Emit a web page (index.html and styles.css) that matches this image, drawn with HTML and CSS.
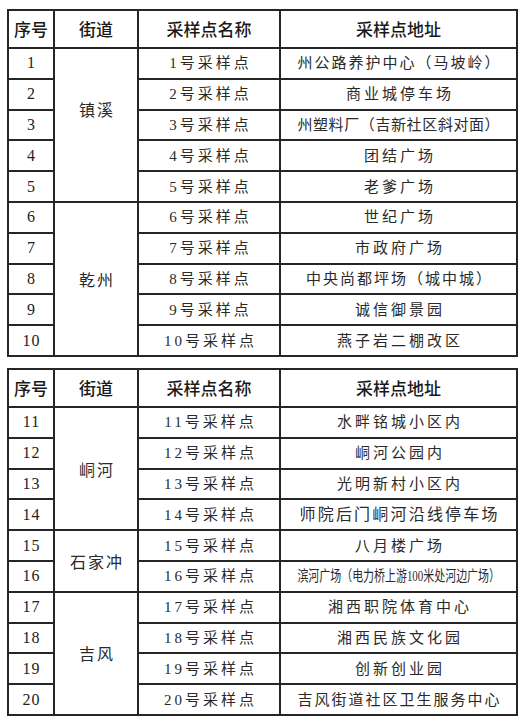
FILE: index.html
```html
<!DOCTYPE html>
<html lang="zh-CN">
<head>
<meta charset="utf-8">
<title>采样点</title>
<link rel="stylesheet" href="styles.css">
</head>
<body>
<div class="page">
<table class="sheet">
<colgroup><col class="c1"><col class="c2"><col class="c3"><col class="c4"></colgroup>
<thead>
<tr class="head"><th>序号</th><th>街道</th><th>采样点名称</th><th>采样点地址</th></tr>
</thead>
<tbody>
<tr><td class="num">1</td><td class="street up" rowspan="5">镇溪</td><td class="name">1号采样点</td><td class="addr t2">州公路养护中心（马坡岭）</td></tr>
<tr><td class="num">2</td><td class="name">2号采样点</td><td class="addr">商业城停车场</td></tr>
<tr><td class="num">3</td><td class="name">3号采样点</td><td class="addr t1">州塑料厂（吉新社区斜对面）</td></tr>
<tr><td class="num">4</td><td class="name">4号采样点</td><td class="addr">团结广场</td></tr>
<tr><td class="num">5</td><td class="name">5号采样点</td><td class="addr">老爹广场</td></tr>
<tr><td class="num">6</td><td class="street" rowspan="5">乾州</td><td class="name">6号采样点</td><td class="addr">世纪广场</td></tr>
<tr><td class="num">7</td><td class="name">7号采样点</td><td class="addr">市政府广场</td></tr>
<tr><td class="num">8</td><td class="name">8号采样点</td><td class="addr t2">中央尚都坪场（城中城）</td></tr>
<tr><td class="num">9</td><td class="name">9号采样点</td><td class="addr">诚信御景园</td></tr>
<tr><td class="num">10</td><td class="name">10号采样点</td><td class="addr">燕子岩二棚改区</td></tr>
</tbody>
</table>

<table class="sheet second">
<colgroup><col class="c1"><col class="c2"><col class="c3"><col class="c4"></colgroup>
<thead>
<tr class="head"><th>序号</th><th>街道</th><th>采样点名称</th><th>采样点地址</th></tr>
</thead>
<tbody>
<tr><td class="num">11</td><td class="street" rowspan="4">峒河</td><td class="name">11号采样点</td><td class="addr">水畔铭城小区内</td></tr>
<tr><td class="num">12</td><td class="name">12号采样点</td><td class="addr">峒河公园内</td></tr>
<tr><td class="num">13</td><td class="name">13号采样点</td><td class="addr">光明新村小区内</td></tr>
<tr><td class="num">14</td><td class="name">14号采样点</td><td class="addr big">师院后门峒河沿线停车场</td></tr>
<tr><td class="num">15</td><td class="street" rowspan="2">石家冲</td><td class="name">15号采样点</td><td class="addr">八月楼广场</td></tr>
<tr><td class="num">16</td><td class="name">16号采样点</td><td class="addr narrow"><span class="squeeze">滨河广场（电力桥上游100米处河边广场）</span></td></tr>
<tr><td class="num">17</td><td class="street" rowspan="4">吉风</td><td class="name">17号采样点</td><td class="addr">湘西职院体育中心</td></tr>
<tr><td class="num">18</td><td class="name">18号采样点</td><td class="addr">湘西民族文化园</td></tr>
<tr><td class="num">19</td><td class="name">19号采样点</td><td class="addr">创新创业园</td></tr>
<tr><td class="num">20</td><td class="name">20号采样点</td><td class="addr t2">吉风街道社区卫生服务中心</td></tr>
</tbody>
</table>
</div>
</body>
</html>
```

FILE: styles.css
```css
html, body {
  margin: 0;
  padding: 0;
  background: #ffffff;
}

.page {
  padding: 9px 0 0 7px;
}

.sheet {
  border-collapse: collapse;
  table-layout: fixed;
  width: 509px;
  color: #222;
  font-family: "Liberation Serif", "Noto Sans CJK SC", serif;
}

.sheet.second {
  margin-top: 11px;
}

.c1 { width: 46px; }
.c2 { width: 84px; }
.c3 { width: 142px; }
.c4 { width: 237px; }

.sheet th,
.sheet td {
  border: 2px solid #262626;
  padding: 0;
  text-align: center;
  vertical-align: middle;
  white-space: nowrap;
  overflow: visible;
}

.head {
  height: 38px;
}

.head th {
  font-family: "Noto Sans CJK SC", sans-serif;
  font-weight: 500;
  font-size: 17px;
  color: #1a1a1a;
  line-height: 20px;
}

tbody tr {
  height: 30.8px;
}

.num {
  font-size: 16px;
  letter-spacing: 1px;
  text-indent: 1px;
  line-height: 20px;
}

.street {
  font-family: "Noto Sans CJK SC", sans-serif;
  font-size: 16px;
  letter-spacing: 2px;
  text-indent: 2px;
  line-height: 20px;
  color: #2a2a2a;
}

.street.up {
  padding-bottom: 32px;
}

.name {
  font-size: 15px;
  letter-spacing: 3px;
  text-indent: 3px;
  line-height: 20px;
  color: #2a2a2a;
}

.addr {
  font-size: 15px;
  letter-spacing: 3px;
  text-indent: 3px;
  line-height: 20px;
  color: #2a2a2a;
}

.addr.t2 {
  letter-spacing: 2px;
  text-indent: 2px;
}

.addr.t1 {
  letter-spacing: 0.6px;
  text-indent: 0.6px;
}

.addr.big {
  font-size: 16px;
  letter-spacing: 2.2px;
  text-indent: 2.2px;
}

.addr.narrow {
  letter-spacing: 0;
  text-indent: 0;
}

.squeeze {
  display: inline-block;
  width: 277px;
  margin: 0 -37px;
  font-size: 15px;
  transform: scaleX(0.73);
  transform-origin: center;
}
```
